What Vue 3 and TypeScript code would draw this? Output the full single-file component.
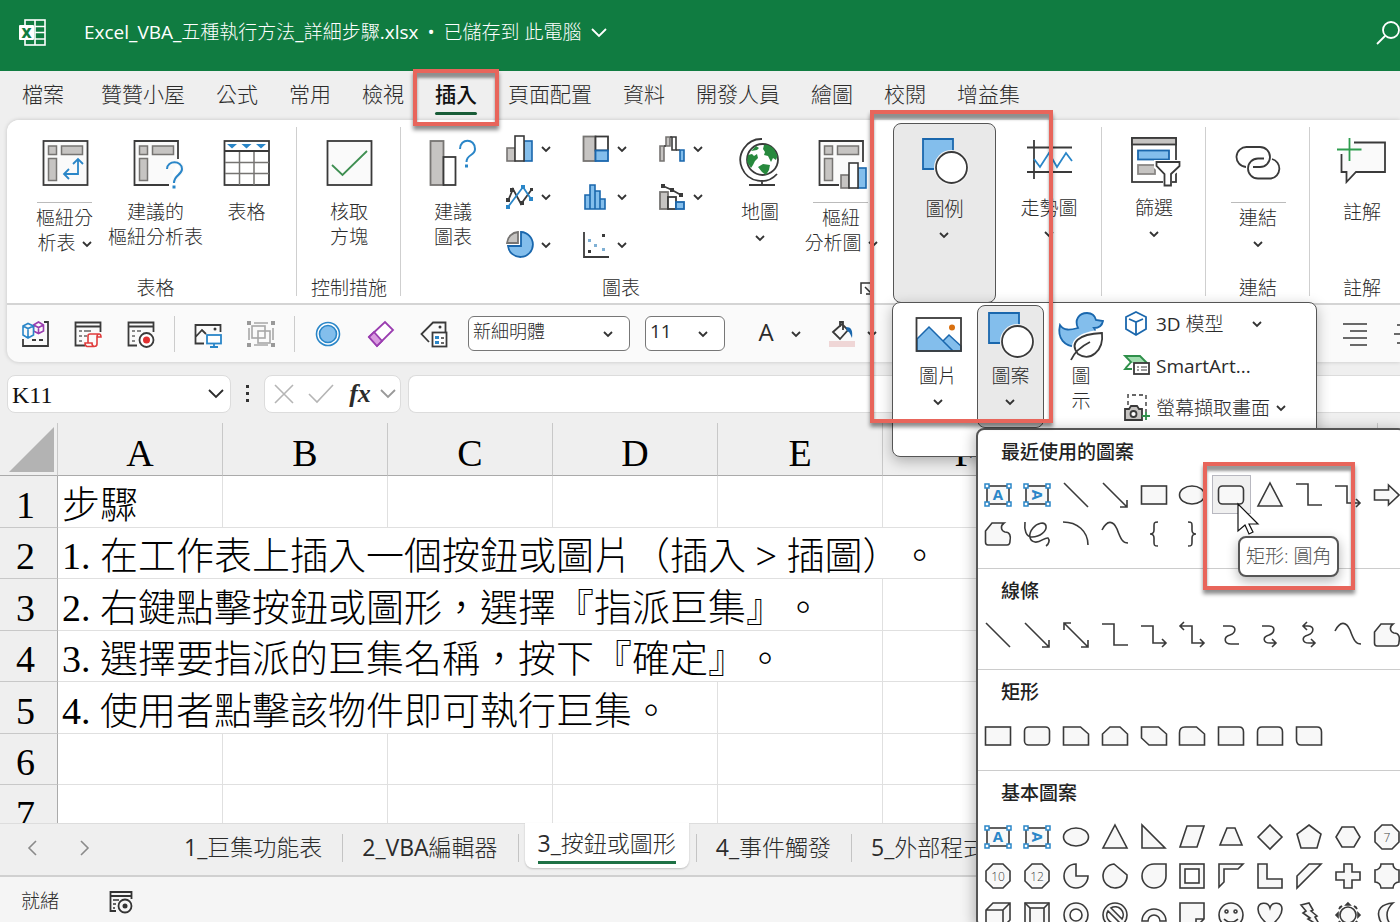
<script setup lang="ts">
import { h, ref } from 'vue'

const K = '#3a3a3a'
const BLUE = '#83beec'
const EDGE = '#1a67ad'
const LINE = '#2a86c8'
const GREY = '#c6c4c2'

const pivotInner =
  `<g fill="${GREY}" stroke="#767472" stroke-width="1.5"><rect x="8.5" y="10" width="8" height="8.5"/><rect x="21.5" y="10" width="21" height="8.5"/><rect x="8.5" y="22.5" width="8" height="22"/></g>`
const bars = (x: number, y: number) =>
  `<g transform="translate(${x} ${y})" stroke-width="1.6"><rect x="0" y="12" width="8" height="13" fill="${GREY}" stroke="#767472"/><rect x="17" y="5" width="8" height="20" fill="${BLUE}" stroke="${EDGE}"/><rect x="8" y="0" width="9" height="25" fill="#fff" stroke="${K}"/></g>`

const art: Record<string, string> = {
  excel: `<g fill="none" stroke="#fff" stroke-width="1.6"><rect x="6" y="1" width="20" height="25"/><path d="M16 1V26M16 7.5H26M16 13.5H26M16 20H26"/></g><rect x="0" y="6" width="15" height="15" rx="1" fill="#fff"/><text x="7.5" y="18.5" text-anchor="middle" font-family="Open Sans, sans-serif" font-weight="800" font-size="14" fill="#107c41">X</text>`,
  search: `<g fill="none" stroke="#fff" stroke-width="1.8"><circle cx="15" cy="9" r="8"/><path d="M9 15L1 23"/></g>`,
  chev: `<path d="M1 3L5 7 9 3" stroke="#333" stroke-width="1.8"/>`,
  chevWide: `<path d="M1 2L8 9 15 2" stroke="currentColor" stroke-width="1.8"/>`,
  left: `<path d="M9 1L2 8 9 15" stroke="#8a8a8a" stroke-width="1.6"/>`,
  right: `<path d="M2 1L9 8 2 15" stroke="#8a8a8a" stroke-width="1.6"/>`,
  launcher: `<path d="M1 12V1H12M5 5L12 12M12 6V12H6" stroke="#333" stroke-width="1.5"/>`,
  cancel: `<path d="M1 1L19 19M19 1L1 19" stroke="#b5b5b5" stroke-width="1.6"/>`,
  accept: `<path d="M1 10L9 18 25 1" stroke="#b5b5b5" stroke-width="1.6"/>`,
  corner: `<path d="M45 0V45H0Z" fill="#b3b3b3"/>`,
  pivot: `<rect x="3.5" y="5" width="44" height="44" fill="#fafafa" stroke="${K}"/>${pivotInner}<path d="M38 24V38H24M33 28L38 23 43 28M29 33L24 38 29 43" stroke="${LINE}" stroke-width="1.8"/>`,
  pivotAsk: `<path d="M47 23V5H3.5V49H38" fill="#fafafa" stroke="${K}"/>${pivotInner}<path d="M36 33C36 24 51 24 51 33 51 39 43 39 43 47" stroke="#fafafa" stroke-width="5"/><path d="M36 33C36 24 51 24 51 33 51 39 43 39 43 47" stroke="${LINE}" stroke-width="2"/><rect x="41.5" y="49.5" width="3" height="3" fill="${LINE}"/>`,
  table: `<rect x="2.5" y="5" width="44.5" height="44" fill="#fff" stroke="${K}"/><path d="M17.5 15V49M32 15V49M3 26.5H47M3 37.5H47" stroke="#767472" stroke-width="1.5"/><path d="M2.5 15H47" stroke="${K}"/><path d="M5 8H15L10 12.5ZM19.5 8H29.5L24.5 12.5ZM34 8H44L39 12.5Z" fill="${LINE}"/>`,
  check: `<rect x="3.5" y="5" width="44" height="44" fill="#fafafa" stroke="${K}"/><path d="M8 29L18.5 39 43 15" stroke="#3f8f52"/>`,
  chartAsk: `<rect x="2.5" y="5" width="13" height="44" fill="${GREY}" stroke="#767472"/><rect x="15.5" y="21" width="12" height="28" fill="#fff" stroke="${K}"/><path d="M32 13C32 2 47 2 47 13 47 20 38.5 18 38.5 26" stroke="${LINE}" stroke-width="2"/><rect x="37" y="28.5" width="3" height="3" fill="${LINE}"/>`,
  globe: `<circle cx="27.5" cy="23.5" r="15.5" fill="#fff" stroke="${K}"/><path d="M13 19L17 18 19 20 22 18 23 22 20 25 18 29 16 32 12 26ZM16 15L21 10 24 12 22 14ZM29 9C32 8 36 10 39 13L42.5 20 41 24 38 22 36 26 33 20 29 19 30 16 28 13ZM23 31L28 28 35 29 34 34 31 39 27 36Z" fill="#27893d"/><path d="M27 3A21 21 0 1 0 42 38M27 44V49M14 49H40" stroke="${K}"/>`,
  pivotChart: `<path d="M47 26V5H3.5V49H23" fill="#fafafa" stroke="${K}"/>${pivotInner}${bars(25, 27)}`,
  shapes: `<path d="M3 2H33V17A16 16 0 0 0 15 32H3Z" fill="${BLUE}"/><path d="M33 14V2H3V32H14" stroke="${EDGE}"/><circle cx="31.5" cy="30.5" r="17.5" fill="#f2f2f2"/><circle cx="31.5" cy="30.5" r="15.5" fill="#fff" stroke="${K}"/>`,
  spark: `<path d="M10 4V43M3 11.5H48M3 36H48" stroke="${K}"/><path d="M10 23L16 31 25 17 33 31 42 17 48 25" stroke="${LINE}"/>`,
  filter: `<rect x="3" y="2" width="44" height="44" fill="#fff" stroke="${K}"/><rect x="3" y="2" width="44" height="6.5" fill="${GREY}" stroke="${K}"/><rect x="9" y="14.5" width="31" height="9" fill="${BLUE}" stroke="${EDGE}"/><rect x="9" y="29" width="17" height="9" fill="${GREY}" stroke="#8a8886"/><path d="M25 24H53V33L43 40V52H34V40L25 32Z" fill="#fff"/><path d="M27.5 26H50.5V30L42 38V49.5H35.5V38L27.5 30Z" fill="#fff" stroke="${K}"/>`,
  link: `<path d="M13 31A10 10 0 0 1 14 11H27A10 10 0 0 1 27 31H20M39 23A10 10 0 0 1 38 42.5H25A10 10 0 0 1 25 22.5H31" stroke="${K}"/>`,
  comment: `<path d="M17 6.5H48V36H19L9.5 46V36H4.5V18" fill="#fafafa" stroke="${K}"/><path d="M0 13.5H24.5M12.5 2V25" stroke="#2f9e4f"/>`,
  picture: `<rect x="3.5" y="7" width="44.5" height="33" fill="#fff"/><path d="M4 28L16 16 40 40H4ZM30 30L36 24 48 35V40H40Z" fill="${BLUE}" stroke="${EDGE}" stroke-width="1.5"/><circle cx="39" cy="16.5" r="3" fill="#d9700f"/><rect x="3.5" y="7" width="44.5" height="33" stroke="${K}"/>`,
  duck: `<path d="M4 14C8 20 14 19 22 17 18 9 23 2 31 2 36 2 39 5 40 9L47 10C46 15 42 17 38 17 42 22 38 36 22 36 8 36 1 27 4 14Z" fill="${BLUE}" stroke="${EDGE}"/><path d="M48 19C34 19 18 23 16 35L12 50 30 48C44 47 50 36 48 19Z" fill="#fff"/><path d="M15 49C18 42 26 35 34 31M22 43C13 32 22 23 46 22 48 40 34 51 22 43Z" stroke="${K}"/>`,
  column: bars(1, 1),
  treemap: `<rect x="1.5" y="1.5" width="12" height="24.5" fill="${GREY}" stroke="#767472"/><rect x="13.5" y="1.5" width="12.5" height="14" fill="#fff" stroke="${K}"/><rect x="13.5" y="15.5" width="12.5" height="10.5" fill="${BLUE}" stroke="${EDGE}"/>`,
  waterfall: `<g stroke-width="1.6"><path d="M2 11H6V26H2ZM8 2H12V11H8Z" fill="${GREY}" stroke="#767472"/><path d="M14 2H18V15H14Z" fill="#fff" stroke="${K}"/><path d="M6 11H8M12 2H14M18 15H22" stroke="${K}"/><path d="M22 15H26V26H22Z" fill="${BLUE}" stroke="${EDGE}"/></g>`,
  lines: `<path d="M2 18L7 6 15 21 26 6" stroke="${K}"/><path d="M2 24L17 4 25 16" stroke="${LINE}"/><path d="M0 15H4V19H0ZM4 5H8V9H4ZM14 18H18V22H14ZM24 5H27V8H24Z" fill="${K}"/><path d="M0 22H4V26H0ZM15 2H19V6H15ZM23 14H27V18H23Z" fill="${LINE}"/>`,
  histogram: `<g fill="${BLUE}" stroke="${EDGE}" stroke-width="1.6"><path d="M3 12H8V26H3ZM8 2H13V26H8ZM13 8H18V26H13ZM18 16H23V26H18Z"/></g>`,
  combo: `<rect x="2" y="9" width="8" height="17" fill="${GREY}" stroke="#767472"/><rect x="10" y="14" width="8" height="12" fill="#fff" stroke="${K}"/><rect x="18" y="19" width="8" height="7" fill="${BLUE}" stroke="${EDGE}"/><path d="M5 3L14 7 23 12" stroke="${K}"/><path d="M3 1H7V5H3ZM12 5H16V9H12ZM21 10H25V14H21Z" fill="${K}"/>`,
  pie: `<path d="M12 12H1A12 12 0 0 1 12 1Z" fill="${GREY}" stroke="#767472"/><path d="M15 1A12.5 12.5 0 1 1 2 15H15Z" fill="${BLUE}" stroke="${EDGE}"/>`,
  scatter: `<path d="M2 1V26H27" stroke="${K}"/><path d="M20 3H23V6H20ZM6 19H9V22H6Z" fill="${K}"/><path d="M6 8H9V11H6ZM12 13H15V16H12ZM20 17H23V20H20Z" fill="#7fb0d4"/>`,
  vba: `<path d="M2 19V26H27V2H23" stroke="${K}"/><path d="M11 20H22" stroke="${K}" stroke-dasharray="4 3"/><g fill="#fafafa" stroke-width="1.6"><path d="M12.5 5L17.5 2 22.5 5V11L17.5 13.5 12.5 11ZM12.5 5L17.5 7.5 22.5 5M17.5 7.5V13" stroke="#9a3db0"/><path d="M2 6L7 3.5 12.5 6V15L7 18 2 15ZM2 6L7 8.5 12.5 6M7 8.5V18" stroke="${LINE}"/></g>`,
  script: `<path d="M11 25.5H1.5V2.5H26.5V12M1.5 6.5H26.5" stroke="${K}"/><path d="M5 11H8M10 11H17M5 16H8M10 16H13M5 21H8" stroke="#666" stroke-width="1.5"/><path d="M14 23V16Q14 14 16 14H25Q27 14 27 17H23V24Q23 26.500 20 26.500H13Q11 26 11 23H18Q18 26 20 26.500M23 17Q23 14 25 14" stroke="#e03c3c" stroke-width="1.6"/>`,
  record: `<path d="M10 25.5H1.5V2.5H26.5V12M1.5 6.5H26.5" stroke="${K}"/><path d="M5 11H8M10 11H14M5 16H8M5 21H8" stroke="#666" stroke-width="1.5"/><circle cx="19.5" cy="20" r="7" fill="#fff" stroke="${K}"/><circle cx="19.5" cy="20" r="3.5" fill="#e03030"/>`,
  screenPic: `<path d="M10 23.5H1.5V5H26.5V12M1.5 17L8 10 12 14" stroke="${K}"/><circle cx="21" cy="9" r="1.5" fill="${K}"/><rect x="13" y="15" width="14" height="8.5" fill="#fff" stroke="${LINE}"/><path d="M20 24V27M16 27H24" stroke="${LINE}"/>`,
  group: `<g stroke="#a8a8a8" stroke-width="1.6"><rect x="5" y="6" width="13" height="12"/><rect x="11" y="11" width="12" height="12"/><path d="M7 3H21M7 25H21M2 8V20M26 8V20"/></g><path d="M0 1H4V5H0ZM24 1H28V5H24ZM0 23H4V27H0ZM24 23H28V27H24Z" fill="#999"/>`,
  ring: `<circle cx="14" cy="14" r="11.5" fill="#fff" stroke="${LINE}" stroke-width="1.6"/><circle cx="14" cy="14" r="8.5" fill="${BLUE}" stroke="${LINE}" stroke-width="1.6"/>`,
  eraser: `<path d="M2 17L18 2 26 10 10 26Z" fill="#fff" stroke="#9a3db0"/><path d="M2 17L7 12 15 21 10 26Z" fill="#d99be0" stroke="#9a3db0"/>`,
  tag: `<path d="M9 22L1.5 14 13 2.5H25.5V12" stroke="${K}"/><circle cx="20" cy="7" r="1.5" fill="${K}"/><rect x="12.5" y="12.5" width="14" height="14" fill="#fff" stroke="${K}"/><path d="M15 16H19V19H15ZM15 21H19V24H15Z" fill="${LINE}"/><path d="M21 18H24M21 23H24" stroke="${K}" stroke-width="1.5"/>`,
  bucket: `<rect x="1" y="21" width="26" height="6" fill="#efd6d6"/><path d="M5 12L14 4 20 10 12 19ZM12 7V2H15V10" stroke="${K}"/><path d="M18 7C23 7 25 10 24 18 22 14 22 12 19 11Z" fill="${EDGE}"/>`,
  alignRight: `<path d="M2 4H26M9 11H26M2 18H26M9 25H26" stroke="${K}" stroke-width="1.6"/>`,
  indent: `<path d="M3 5H26M0 14H26M3 23H26" stroke="${K}" stroke-width="1.6"/>`,
  cube: `<path d="M14 2L24 7V19L14 25 4 19V7Z" fill="#fff" stroke="${EDGE}"/><path d="M7 9L14 12 21 9M14 12V25" stroke="${EDGE}"/>`,
  smart: `<path d="M3 4H18L25 11H8L3 18V15L8 10Z" fill="#9fdcae"/><path d="M25 11L18 4H3L9 10 3 17H10" stroke="#2f8f4a"/><rect x="12" y="11" width="15" height="11" fill="#fff" stroke="${K}"/><path d="M15 15H17M19 15H25M15 18H17M19 18H25" stroke="${K}" stroke-width="1.2"/>`,
  camera: `<path d="M6 11V1H24V18" stroke="#666" stroke-dasharray="4 3"/><path d="M3 15H7L9 12H15L17 15H20V26H3Z" fill="${GREY}" stroke="${K}"/><circle cx="11.5" cy="20" r="3" fill="#fff" stroke="${K}"/><path d="M20 22H28M24 18V26" stroke="#2f8f4a"/>`,
  macroStatus: `<path d="M7 21H1.5V2H22.5V9M1.5 6H22.5" stroke="#333"/><path d="M4 10H10M4 14H7M4 18H6" stroke="#333" stroke-width="1.5"/><circle cx="16" cy="16" r="6.5" fill="#f5f5f5" stroke="#333"/><circle cx="16" cy="16" r="2.5" fill="#333"/>`,
  cursor: `<path d="M1 1V28L8 22 12 31 16 29 12 21H21Z" fill="#fff" stroke="#111" stroke-width="1.2"/>`,
}

const handles = `<path d="M1 3H5V7H1ZM23 3H27V7H23ZM1 21H5V25H1ZM23 21H27V25H23Z" fill="#fff" stroke="${LINE}" stroke-width="1.5"/>`
const label = (t: string, extra = '') =>
  `<text x="14" y="19" text-anchor="middle" font-family="Open Sans, sans-serif" ${extra}>${t}</text>`
const blueA = label('A', `font-size="15" font-weight="700" fill="${LINE}" stroke="none"`)
const octagon = '<path d="M9 2H19L26 9V19L19 26H9L2 19V9Z"/>'
const openPath = (d: string) => `<path d="${d}" fill="none"/>`
const solid = (d: string) => `<path d="${d}"/>`

const shapeArt: Record<string, string> = {
  文字方塊: `<rect x="3" y="5" width="22" height="18"/>${handles}${blueA}`,
  垂直文字方塊: `<rect x="3" y="5" width="22" height="18"/>${handles}<g transform="rotate(90 14 14)">${blueA}</g>`,
  線條: openPath('M2 2L26 26'),
  線條箭頭: openPath('M2 2L26 26M26 19V26H19'),
  雙箭頭線條: openPath('M2 2L26 26M26 19V26H19M2 9V2H9'),
  矩形: '<rect x="1.5" y="5" width="25" height="18"/>',
  橢圓: '<ellipse cx="14" cy="14" rx="12.5" ry="9"/>',
  圓角矩形: '<rect x="1.5" y="5" width="25" height="18" rx="4"/>',
  三角形: solid('M14 2L26 25H2Z'),
  肘形: openPath('M1 3H13V24H27'),
  肘形箭頭: openPath('M1 5H13V22H26M22 18L26 22 22 26'),
  肘形雙箭頭: openPath('M2 5H14V22H26M22 18L26 22 22 26M6 1L2 5 6 9'),
  右箭號: solid('M1.5 9H15.5V4L26 14 15.5 24V19H1.5Z'),
  手繪多邊形: solid('M8 3H20C16 6 17 11 21 12 26 12 27 16 26 21 26 24 25 25 23 25H4C2 25 1.5 24 1.5 22V11Z'),
  塗鴉: openPath('M2 2C1 10 3 17 9 17 17 17 24 11 23 6 22 1 14 3 10 8 5 14 6 21 12 22 17 23 22 17 25 18 27 20 26 24 23 26'),
  弧形: openPath('M1 2C15 2 26 11 26 25'),
  曲線: openPath('M1 10C6 0 12 0 16 9 20 20 22 23 27 23'),
  左大括弧: openPath('M18 2C14 2 14 3 14 6V10C14 13 13 14 10 14 13 14 14 15 14 18V22C14 25 14 26 18 26'),
  右大括弧: openPath('M10 2C14 2 14 3 14 6V10C14 13 15 14 18 14 15 14 14 15 14 18V22C14 25 14 26 10 26'),
  曲線接點: openPath('M6 5H13C20 5 19 12 13 14 6 16 7 23 14 23H22'),
  曲線箭頭: openPath('M6 5H13C20 5 19 12 13 14 6 16 7 22 14 22H20M16 18L20 22 16 26'),
  曲線雙箭頭: openPath('M8 5H13C20 5 19 12 13 14 6 16 7 22 14 22H20M16 18L20 22 16 26M12 1L8 5 12 9'),
  剪去單角: solid('M1.5 5H18.5L26.5 12V23H1.5Z'),
  剪去同側角: solid('M9 5H19L26.5 12V23H1.5V12Z'),
  剪去對角: solid('M1.5 5H18.5L26.5 12V23H9L1.5 16Z'),
  剪去圓角: solid('M7 5H18.5L26.5 12V23H1.5V11Q1.5 5 7 5Z'),
  單圓角: solid('M1.5 5H22Q26.5 5 26.5 10V23H1.5Z'),
  同側圓角: solid('M6 5H22Q26.5 5 26.5 10V23H1.5V10Q1.5 5 6 5Z'),
  對角圓角: solid('M1.5 5H22Q26.5 5 26.5 10V23H6Q1.5 23 1.5 18Z'),
  直角三角形: solid('M2 2V25H25Z'),
  平行四邊形: solid('M9 3H26L19 24H2Z'),
  梯形: solid('M10 5H18L25 22H3Z'),
  菱形: solid('M14 2L26 14 14 26 2 14Z'),
  五邊形: solid('M14 2L26 11 22 25H6L2 11Z'),
  六邊形: solid('M8 4H20L26 14 20 24H8L2 14Z'),
  七邊形: octagon + label('7', 'font-size="12" fill="#444" stroke="none"'),
  十邊形: octagon + label('10', 'font-size="12" fill="#444" stroke="none"'),
  十二邊形: octagon + label('12', 'font-size="12" fill="#444" stroke="none"'),
  部分圓形: solid('M14 2A12 12 0 1 0 26 14H14Z'),
  弦形: solid('M13 2L26 13A12 12 0 1 1 13 2Z'),
  淚滴形: solid('M14 2H26V14A12 12 0 1 1 14 2Z'),
  框架: '<rect x="2" y="2" width="24" height="24"/><rect x="7" y="7" width="14" height="14" fill="#fff"/>',
  半框架: solid('M2 2H26L21 7H7V20L2 25Z'),
  L圖案: solid('M2 2H11V17H26V26H2Z'),
  斜紋: solid('M14 2H26L2 26V14Z'),
  十字: solid('M10 2H18V10H26V18H18V26H10V18H2V10H10Z'),
  匾額: solid('M8 2H20A6 6 0 0 0 26 8V20A6 6 0 0 0 20 26H8A6 6 0 0 0 2 20V8A6 6 0 0 0 8 2Z'),
  立方體: solid('M2 9L9 2H26V19L19 26H2ZM2 9H19V26M19 9L26 2'),
  斜角: '<rect x="2" y="2" width="24" height="24"/><rect x="7" y="7" width="14" height="19"/><path d="M2 2L7 7M26 2L21 7"/>',
  甜甜圈: '<circle cx="14" cy="14" r="12"/><circle cx="14" cy="14" r="6" fill="#fff"/>',
  禁止: '<circle cx="14" cy="14" r="12"/><path d="M10 7A8 8 0 0 1 21 18ZM7 10A8 8 0 0 0 18 21Z" fill="#fff"/>',
  空心弧: solid('M2 20A12 12 0 0 1 26 20H20A6 6 0 0 0 8 20Z'),
  摺角: solid('M2 2H26V18L18 26H2ZM18 26V18H26'),
  笑臉: '<circle cx="14" cy="14" r="12"/><circle cx="9.5" cy="10.5" r="1.5"/><circle cx="18.5" cy="10.5" r="1.5"/><path d="M7 18C11 22 17 22 21 18" fill="none"/>',
  心形: solid('M14 26C8 20 2 15 2 8 2 1 12 0 14 7 16 0 26 1 26 8 26 15 20 20 14 26Z'),
  閃電: solid('M6 4L14 2 18 9 16 10 22 15 20 16 26 26 13 18 15 17 8 12 11 10Z'),
  太陽: '<circle cx="14" cy="14" r="8"/><path d="M14 2L16 4H12ZM26 14L24 12V16ZM2 14L4 12V16ZM22 6L23 8 20 5ZM6 6L8 5 5 8ZM14 26L16 24H12ZM22 22L23 20 20 23ZM6 22L8 23 5 20Z" fill="#3a3a3a"/>',
  月亮: solid('M20 2C8 3 4 9 6 16 7 22 12 26 20 26 12 19 12 9 20 2Z'),
}

type IconProps = { name: string; w?: number; h?: number }
const Icon = (p: IconProps) => {
  const w = p.w ?? 28
  const hh = p.h ?? w
  return h('svg', {
    width: w, height: hh, viewBox: `0 0 ${w} ${hh}`, fill: 'none', 'stroke-width': 1.8,
    'aria-hidden': 'true', overflow: 'visible', innerHTML: art[p.name],
  })
}
const Shape = (p: { name: string }) =>
  h('svg', {
    width: 28, height: 28, viewBox: '0 0 28 28', fill: '#f8f8f8', stroke: '#3a3a3a', 'stroke-width': 1.6,
    'aria-hidden': 'true', innerHTML: shapeArt[p.name],
  })

// Latin runs carry a heavier weight than the Chinese ones.
const runs = (s: string) =>
  (s.match(/[\x20-\x7e•]+|[^\x20-\x7e•]+/g) ?? []).map((text) => ({ text, latin: /[\x21-\x7e•]/.test(text) }))

const tabs = ['檔案', '贊贊小屋', '公式', '常用', '檢視', '插入', '頁面配置', '資料', '開發人員', '繪圖', '校閱', '增益集']
const activeTab = ref('插入')

type Command = { icon: string; lines: string[]; rule?: boolean; more?: 'inline' | 'below'; tight?: boolean }
type Group = { key: string; title: string; commands: Command[] }
const firstGroups: Group[] = [
  {
    key: 'tables', title: '表格', commands: [
      { icon: 'pivot', lines: ['樞紐分', '析表'], rule: true, more: 'inline' },
      { icon: 'pivotAsk', lines: ['建議的', '樞紐分析表'] },
      { icon: 'table', lines: ['表格'] },
    ],
  },
  { key: 'controls', title: '控制措施', commands: [{ icon: 'check', lines: ['核取', '方塊'] }] },
]
const lastGroups: Group[] = [
  { key: 'spark', title: '', commands: [{ icon: 'spark', lines: ['走勢圖'], more: 'below', tight: true }] },
  { key: 'filter', title: '', commands: [{ icon: 'filter', lines: ['篩選'], more: 'below', tight: true }] },
  { key: 'links', title: '連結', commands: [{ icon: 'link', lines: ['連結'], rule: true, more: 'below' }] },
  { key: 'comments', title: '註解', commands: [{ icon: 'comment', lines: ['註解'] }] },
]
const charts = [
  ['column', '直條圖'], ['treemap', '階層圖'], ['waterfall', '瀑布圖'], ['lines', '折線圖'],
  ['histogram', '統計圖'], ['combo', '組合圖'], ['pie', '圓形圖'], ['scatter', '散佈圖'],
]
const quick = [['vba', 'script', 'record'], ['screenPic', 'group'], ['ring', 'eraser', 'tag']]

const columns = ['A', 'B', 'C', 'D', 'E', 'F', '', '', '']
const rows = [
  { text: '步驟', span: 1 },
  { text: '1. 在工作表上插入一個按鈕或圖片（插入 > 插圖）。', span: 6 },
  { text: '2. 右鍵點擊按鈕或圖形，選擇『指派巨集』。', span: 5 },
  { text: '3. 選擇要指派的巨集名稱，按下『確定』。', span: 5 },
  { text: '4. 使用者點擊該物件即可執行巨集。', span: 4 },
  { text: '', span: 1 },
  { text: '', span: 1 },
]
const sheets = ['1_巨集功能表', '2_VBA編輯器', '3_按鈕或圖形', '4_事件觸發', '5_外部程式']
const activeSheet = ref('3_按鈕或圖形')

const sections = [
  {
    title: '最近使用的圖案',
    items: ['文字方塊', '垂直文字方塊', '線條', '線條箭頭', '矩形', '橢圓', '圓角矩形', '三角形', '肘形', '肘形箭頭', '右箭號', '手繪多邊形', '塗鴉', '弧形', '曲線', '左大括弧', '右大括弧'],
  },
  { title: '線條', items: ['線條', '線條箭頭', '雙箭頭線條', '肘形', '肘形箭頭', '肘形雙箭頭', '曲線接點', '曲線箭頭', '曲線雙箭頭', '曲線', '手繪多邊形'] },
  { title: '矩形', items: ['矩形', '圓角矩形', '剪去單角', '剪去同側角', '剪去對角', '剪去圓角', '單圓角', '同側圓角', '對角圓角'] },
  {
    title: '基本圖案',
    items: [
      '文字方塊', '垂直文字方塊', '橢圓', '三角形', '直角三角形', '平行四邊形', '梯形', '菱形', '五邊形', '六邊形', '七邊形',
      '十邊形', '十二邊形', '部分圓形', '弦形', '淚滴形', '框架', '半框架', 'L圖案', '斜紋', '十字', '匾額',
      '立方體', '斜角', '甜甜圈', '禁止', '空心弧', '摺角', '笑臉', '心形', '閃電', '太陽', '月亮',
    ],
  },
]
const cellName = ref('K11')
const formula = ref('')
</script>

<template>
  <div class="app" lang="zh-Hant">
    <header class="title">
      <Icon name="excel" :w="27" />
      <button class="doc">
        <span><span v-for="(r, i) in runs('Excel_VBA_五種執行方法_詳細步驟.xlsx')" :key="i" :class="{ latin: r.latin }">{{ r.text }}</span></span>
        <span class="latin">•</span><span>已儲存到 此電腦</span>
        <Icon name="chevWide" :w="16" :h="11" />
      </button>
      <button class="find" aria-label="搜尋"><Icon name="search" :w="24" /></button>
    </header>

    <nav class="tabs">
      <button v-for="t in tabs" :key="t" :class="{ on: t === activeTab }" @click="activeTab = t">{{ t }}</button>
    </nav>

    <section class="ribbon">
      <div class="groups">
        <div v-for="g in firstGroups" :key="g.key" class="group" :class="g.key">
          <div class="cmds">
            <button v-for="c in g.commands" :key="c.icon" class="cmd" :class="{ rule: c.rule }">
              <Icon :name="c.icon" :w="50" :h="56" />
              <span class="lbl">
                <span v-for="(l, i) in c.lines" :key="l">{{ l }}<Icon v-if="c.more && i === c.lines.length - 1" name="chev" :w="10" /></span>
              </span>
            </button>
          </div>
          <h2>{{ g.title }}</h2>
        </div>

        <div class="group charts">
          <div class="cmds">
            <button class="cmd"><Icon name="chartAsk" :w="50" :h="56" /><span class="lbl"><span>建議</span><span>圖表</span></span></button>
            <div class="mini">
              <button v-for="c in charts" :key="c[0]" :aria-label="c[1]"><Icon :name="c[0]" /><Icon name="chev" :w="10" /></button>
            </div>
            <button class="cmd map"><Icon name="globe" :w="50" :h="56" /><span class="lbl"><span>地圖</span><Icon name="chev" :w="10" class="below" /></span></button>
            <button class="cmd rule"><Icon name="pivotChart" :w="50" :h="56" /><span class="lbl"><span>樞紐</span><span>分析圖<Icon name="chev" :w="10" /></span></span></button>
          </div>
          <h2>圖表</h2>
          <button class="launch" aria-label="圖表設定"><Icon name="launcher" :w="13" /></button>
        </div>

        <button class="cmd tight illus">
          <Icon name="shapes" :w="50" :h="56" /><span class="lbl"><span>圖例</span><Icon name="chev" :w="10" class="below" /></span>
        </button>

        <div v-for="g in lastGroups" :key="g.key" class="group" :class="g.key">
          <div class="cmds">
            <button v-for="c in g.commands" :key="c.icon" class="cmd" :class="{ rule: c.rule, tight: c.tight }">
              <Icon :name="c.icon" :w="50" :h="56" />
              <span class="lbl"><span v-for="l in c.lines" :key="l">{{ l }}</span><Icon v-if="c.more" name="chev" :w="10" class="below" /></span>
            </button>
          </div>
          <h2>{{ g.title }}</h2>
        </div>
      </div>

      <div class="quick">
        <div v-for="(set, i) in quick" :key="i" class="set">
          <button v-for="q in set" :key="q" :aria-label="q"><Icon :name="q" /></button>
        </div>
        <label class="pick font"><select aria-label="字型"><option>新細明體</option></select><Icon name="chev" :w="10" /></label>
        <label class="pick size"><select aria-label="字型大小"><option>11</option></select><Icon name="chev" :w="10" /></label>
        <button class="colour" aria-label="字型色彩"><span class="letter">A</span><Icon name="chev" :w="10" /></button>
        <button class="colour" aria-label="填滿色彩"><Icon name="bucket" /><Icon name="chev" :w="10" /></button>
        <div class="set tail">
          <button aria-label="靠右對齊"><Icon name="alignRight" /></button>
          <button aria-label="縮排"><Icon name="indent" /></button>
        </div>
      </div>
    </section>

    <section class="formula">
      <div class="field name"><input v-model="cellName" aria-label="名稱方塊" /><button aria-label="名稱清單"><Icon name="chevWide" :w="16" :h="11" /></button></div>
      <span class="dots"><i></i><i></i><i></i></span>
      <div class="field fx">
        <button aria-label="取消"><Icon name="cancel" :w="20" /></button>
        <button aria-label="輸入"><Icon name="accept" :w="26" :h="20" /></button>
        <button class="fn">fx</button>
        <button class="dim" aria-label="更多"><Icon name="chevWide" :w="16" :h="11" /></button>
      </div>
      <input v-model="formula" class="field bar" aria-label="資料編輯列" />
    </section>

    <main class="sheet">
      <table>
        <colgroup><col class="rowno" /><col v-for="(c, i) in columns" :key="i" /></colgroup>
        <thead>
          <tr><th class="all"><Icon name="corner" :w="45" /></th><th v-for="(c, i) in columns" :key="i" scope="col">{{ c }}</th></tr>
        </thead>
        <tbody>
          <tr v-for="(r, i) in rows" :key="i">
            <th scope="row">{{ i + 1 }}</th>
            <td :colspan="r.span">{{ r.text }}</td>
            <td v-for="n in columns.length - r.span" :key="n"></td>
          </tr>
        </tbody>
      </table>
    </main>

    <nav class="sheets">
      <button class="step" aria-label="上一張"><Icon name="left" :w="11" :h="16" /></button>
      <button class="step" aria-label="下一張"><Icon name="right" :w="11" :h="16" /></button>
      <button v-for="s in sheets" :key="s" class="tab" :class="{ on: s === activeSheet }" @click="activeSheet = s">
        <span v-for="(r, i) in runs(s)" :key="i" :class="{ latin: r.latin }">{{ r.text }}</span>
      </button>
    </nav>

    <footer class="status"><span>就緒</span><button aria-label="錄製巨集"><Icon name="macroStatus" :w="24" /></button></footer>

    <div class="panel">
      <button class="cmd pic"><Icon name="picture" :w="50" /><span class="lbl"><span>圖片</span><Icon name="chev" :w="10" class="below" /></span></button>
      <button class="cmd pressed"><Icon name="shapes" :w="50" /><span class="lbl"><span>圖案</span><Icon name="chev" :w="10" class="below" /></span></button>
      <button class="cmd"><Icon name="duck" :w="50" /><span class="lbl"><span>圖</span><span>示</span></span></button>
      <div class="list">
        <button><Icon name="cube" /><span><span class="latin">3D</span> 模型</span><Icon name="chev" :w="10" class="far" /></button>
        <button><Icon name="smart" /><span class="latin">SmartArt...</span></button>
        <button><Icon name="camera" />螢幕擷取畫面<Icon name="chev" :w="10" /></button>
      </div>
    </div>

    <div class="gallery">
      <section v-for="(s, si) in sections" :key="s.title">
        <h3>{{ s.title }}</h3>
        <div class="grid">
          <button v-for="(n, i) in s.items" :key="i" :aria-label="n" :class="{ hot: si === 0 && n === '圓角矩形' }"><Shape :name="n" /></button>
        </div>
      </section>
    </div>

    <div class="tip" role="tooltip">矩形: 圓角</div>
    <Icon name="cursor" :w="22" :h="32" class="cursor" />
    <div class="mark m1"></div>
    <div class="mark m2"></div>
    <div class="mark m3"></div>
  </div>
</template>

<style>
html, body { margin: 0; overflow: hidden; }
</style>

<style scoped>
.app {
  position: relative; display: flex; flex-direction: column; height: 100vh; overflow: hidden;
  background: #efefef; color: #2b2b2b;
  font: 300 19px/25px "Open Sans", "Noto Sans CJK TC", sans-serif;
}
.app * { box-sizing: border-box; }
button, input, select { margin: 0; padding: 0; border: 0; background: none; color: inherit; font: inherit; }
svg { display: block; flex: none; }
h2, h3 { margin: 0; font: inherit; }
.latin { font-weight: 400; }

.title { display: flex; align-items: center; flex: none; height: 71px; padding: 0 0 6px 19px; background: #107c41; color: #fff; }
.doc { display: flex; align-items: center; gap: 9px; margin-left: 38px; font-size: 19px; white-space: nowrap; }
.find { margin-left: auto; }

.tabs { display: flex; flex: none; gap: 31px; height: 49px; padding-left: 22px; font-size: 21px; white-space: nowrap; }
.tabs button { position: relative; padding-bottom: 2px; }
.tabs button:first-child { margin-right: 6px; }
.tabs .on { color: #111; font-weight: 500; }
.tabs .on::after { content: ""; position: absolute; left: 0; right: 0; bottom: 5px; height: 3px; border-radius: 2px; background: #185c37; }

.ribbon { flex: none; margin-left: 7px; border-radius: 12px 0 0 12px; background: #fafafa; box-shadow: 0 0 4px rgba(0, 0, 0, .18); overflow: hidden; }
.groups { display: flex; height: 185px; background: #fff; border-bottom: 2px solid #d4d4d4; }
.group { position: relative; display: flex; flex-direction: column; flex: none; width: 104px; }
.group::after { content: ""; position: absolute; right: 0; top: 7px; bottom: 7px; width: 1px; background: #cfcfcf; }
.group.tables { width: 290px; padding: 0 5px 0 12px; }
.group.charts { width: 492px; padding-left: 7px; }
.group.charts::after, .group.comments::after { display: none; }
.group.spark { width: 106px; }
.cmds { display: flex; flex: 1; }
.group h2 { height: 27px; text-align: center; white-space: nowrap; }
.charts h2 { padding-right: 59px; }
.cmd { display: flex; flex: 1; flex-direction: column; align-items: center; justify-content: flex-start; min-width: 0; padding-top: 16px; white-space: nowrap; }
.charts .cmd { flex: none; width: 90px; }
.charts .map { width: 60px; margin-right: 6px; }
.lbl { display: flex; flex-direction: column; align-items: center; margin-top: 8px; }
.lbl > span { display: flex; align-items: center; gap: 6px; }
.rule .lbl { margin-top: 10px; }
.rule .lbl::before { content: ""; width: 55px; height: 1px; margin-bottom: 3px; background: #bbb; }
.tight .lbl { margin-top: 4px; }
.below { margin: 8px 0 7px; }
.mini { display: grid; grid-template-columns: repeat(3, 76px); grid-auto-rows: 48px; align-content: start; padding: 5px 0 0 8px; width: 232px; }
.mini button { display: flex; align-items: center; gap: 7px; }
.launch { position: absolute; right: 20px; bottom: 8px; }
.illus { flex: none; width: 103px; height: 180px; margin-top: 3px; padding-top: 13px; border: 1px solid #555; border-radius: 8px; background: #e9e9e9; }

.quick { display: flex; align-items: center; height: 57px; padding-left: 14px; }
.set { display: flex; gap: 25px; }
.set + .set::before { content: ""; width: 1px; height: 36px; margin: -4px -6px -4px 19px; background: #ccc; }
.set.tail::before { display: none; }
.pick { position: relative; display: flex; align-items: center; height: 35px; border: 1px solid #777; border-radius: 6px; background: #fff; }
.pick select { appearance: none; width: 100%; height: 100%; padding: 0 4px 4px; }
.pick svg { position: absolute; right: 16px; pointer-events: none; }
.font { width: 162px; margin-left: 20px; font-size: 18px; }
.size { width: 80px; margin-left: 15px; font-weight: 400; }
.colour { display: flex; align-items: center; gap: 11px; margin-left: 27px; }
.letter { width: 28px; padding-bottom: 4px; text-align: center; font-weight: 400; font-size: 24px; }
.tail { margin-left: auto; margin-right: -22px; }

.formula { display: flex; align-items: center; flex: none; height: 61px; padding: 2px 0 0 7px; }
.field { display: flex; align-items: center; flex: none; height: 38px; border: 1px solid #dcdcdc; border-radius: 8px; background: #fff; }
.name { width: 224px; padding: 0 6px 0 4px; }
.name input { flex: 1; min-width: 0; padding-top: 4px; color: #111; font: 24px "Liberation Serif", serif; outline: 0; }
.dots { display: flex; flex-direction: column; gap: 4px; margin: 0 15px; }
.dots i { width: 3px; height: 3px; background: #333; }
.fx { width: 137px; padding: 0 3px 0 9px; gap: 14px; }
.fn { width: 24px; margin-right: -6px; font: italic 700 26px/30px "Liberation Serif", serif; }
.dim { color: #999; }
.bar { flex: 1; min-width: 0; margin-left: 7px; border-radius: 8px 0 0 8px; border-right: 0; padding: 0 8px; outline: 0; }

.sheet { flex: 1; min-height: 0; overflow: hidden; background: #fff; }
table { width: 1543px; border-collapse: separate; border-spacing: 0; table-layout: fixed; color: #000; font: 300 38px/50px "Liberation Serif", "Noto Sans CJK TC", serif; text-spacing-trim: space-all; }
.rowno { width: 58px; }
th, td { height: 52px; padding: 0; border-right: 1px solid #e0e0e0; border-bottom: 1px solid #e0e0e0; text-align: left; white-space: nowrap; font-weight: inherit; }
tbody tr:nth-child(even) > * { height: 51px; }
th { background: #efefef; text-align: center; border-color: #c8c8c8; }
thead th { height: 53px; padding-top: 8px; line-height: 44px; border-bottom-color: #aaa; }
tbody th { padding-right: 6px; padding-top: 6px; line-height: 44px; border-right-color: #aaa; }
td { padding: 6px 0 0 4px; line-height: 44px; }
thead .all { padding: 0 0 0 9px; }

.sheets { display: flex; flex: none; height: 52px; border-top: 1px solid #ddd; background: #efefef; font-size: 23px; white-space: nowrap; }
.step { display: flex; align-items: center; justify-content: center; width: 52px; padding-bottom: 4px; }
.step:first-child { margin-left: 6px; }
.tab { position: relative; display: flex; align-items: center; padding: 0 20px 4px; }
.step + .tab { margin-left: 54px; }
.tab + .tab::before { content: ""; position: absolute; left: 0; top: 10px; height: 28px; width: 1px; background: #c4c4c4; }
.tab.on { height: 45px; margin: -1px 7px 0; padding: 0 13px 4px; border-radius: 0 0 8px 8px; background: #fff; box-shadow: 0 1px 2px rgba(0, 0, 0, .2); }
.tab + .tab.on::before { left: -7px; top: 11px; }
.tab.on::after { content: ""; position: absolute; left: 13px; right: 13px; bottom: 4px; height: 3px; background: #1e7145; }
.status { display: flex; align-items: center; flex: none; gap: 50px; height: 47px; padding: 4px 0 0 21px; border-top: 2px solid #d0d0d0; background: #f5f5f5; }

.panel { position: absolute; left: 892px; top: 302px; display: flex; width: 425px; height: 155px; border: 1px solid #555; border-radius: 8px; background: #fff; box-shadow: 0 4px 14px rgba(0, 0, 0, .28); }
.panel .cmd { flex: none; width: 74px; padding-top: 8px; }
.panel .lbl { margin-top: 3px; }
.panel .pic { width: 84px; padding-left: 6px; }
.panel .pressed { width: 67px; height: 123px; margin-top: 2px; padding-top: 5px; border: 1px solid #555; border-radius: 8px; background: #e9e9e9; }
.list { display: flex; flex-direction: column; }
.list button { display: flex; align-items: center; gap: 6px; height: 42px; padding-left: 4px; }
.list .far { margin-left: 22px; }

.gallery { position: absolute; left: 976px; right: -6px; top: 428px; bottom: -6px; overflow: hidden; border: 2px solid #555; border-radius: 8px; background: #fff; box-shadow: -2px 2px 14px rgba(0, 0, 0, .28); }
.gallery section { padding-bottom: 15px; border-bottom: 1px solid #ccc; }
.gallery h3 { height: 46px; padding: 10px 0 0 23px; color: #222; font-weight: 500; }
.grid { display: grid; grid-template-columns: repeat(11, 1fr); grid-auto-rows: 39px; width: 427px; margin-left: 1px; }
.gallery section:first-child .grid { margin-top: -1px; }
.grid button { display: flex; align-items: center; justify-content: center; }
.grid .hot { border: 1px solid #b8b8c0; background: #f0f0f0; }

.tip { position: absolute; left: 1238px; top: 536px; padding: 6px; border: 2px solid #555; border-radius: 8px; background: #fff; color: #555; box-shadow: 0 4px 12px rgba(0, 0, 0, .3); white-space: nowrap; }
.cursor { position: absolute; left: 1237px; top: 503px; }
.mark { position: absolute; border: 4px solid #e8655b; box-shadow: 0 4px 4px rgba(0, 0, 0, .45), inset 0 5px 3px rgba(0, 0, 0, .4); pointer-events: none; }
.m1 { left: 413px; top: 69px; width: 86px; height: 57px; }
.m2 { left: 870px; top: 110px; width: 183px; height: 313px; }
.m3 { left: 1203px; top: 462px; width: 152px; height: 128px; }
</style>
